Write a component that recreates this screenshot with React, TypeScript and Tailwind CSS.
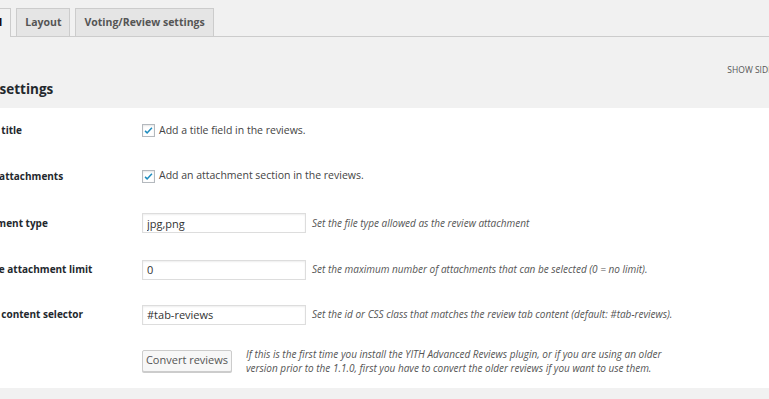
import React from 'react';

const font = { fontFamily: '"Open Sans", "Noto Sans", sans-serif' };

function Label({ children }: { children: React.ReactNode }) {
  return <div className="w-[179px] shrink-0 text-[10px] font-bold text-[#23282d] whitespace-nowrap">{children}</div>;
}

function CheckRow({ label, text, h }: { label: string; text: string; h: string }) {
  return (
    <div className={`flex items-center ${h}`}>
      <Label>{label}</Label>
      <div className="flex items-center gap-[4px]">
        <span className="w-[13px] h-[13px] border border-[#b4b9be] bg-white flex items-center justify-center shadow-[inset_0_1px_2px_rgba(0,0,0,0.1)]">
          <svg width="11" height="11" viewBox="0 0 16 16">
            <path d="M3 8.5l3 3 7-7.5" fill="none" stroke="#1e8cbe" strokeWidth="2.2" />
          </svg>
        </span>
        <span className="text-[10.5px] text-[#444] whitespace-nowrap">{text}</span>
      </div>
    </div>
  );
}

function InputRow({ label, value, desc, h }: { label: string; value: string; desc: string; h: string }) {
  return (
    <div className={`flex items-center ${h}`}>
      <Label>{label}</Label>
      <input
        readOnly
        value={value}
        className="w-[164px] h-[20px] shrink-0 border border-[#ddd] bg-white px-[4px] text-[11px] text-[#333] shadow-[inset_0_1px_2px_rgba(0,0,0,0.07)] outline-none"
        style={font}
      />
      <span className="ml-[6px] text-[10px] italic text-[#555] whitespace-nowrap">{desc}</span>
    </div>
  );
}

export default function App() {
  return (
    <div className="w-[769px] h-[399px] overflow-hidden bg-[#f1f1f1]" style={font}>
      {/* tabs */}
      <div className="flex items-end h-[37px] border-b border-[#ccc]">
        <div className="ml-[-48px] h-[29px] px-[8px] flex items-center border border-b-0 border-[#ccc] bg-[#f1f1f1] mb-[-1px] text-[10.5px] font-bold text-[#000]">
          General
        </div>
        <div className="ml-[5px] h-[28px] px-[8px] flex items-center border border-b-0 border-[#ccc] bg-[#e5e5e5] text-[10.5px] font-bold text-[#555]">
          Layout
        </div>
        <div className="ml-[5px] h-[28px] px-[8px] flex items-center border border-b-0 border-[#ccc] bg-[#e5e5e5] text-[10.5px] font-bold text-[#555]">
          Voting/Review settings
        </div>
      </div>

      <div className="flex justify-end pt-[26px]">
        <span className="mr-[-20px] text-[8.5px] leading-[13px] text-[#555] uppercase whitespace-nowrap">Show sidebar</span>
      </div>

      <h2 className="ml-[-57px] mt-[3px] text-[13.5px] leading-[20px] font-bold text-[#23282d] whitespace-nowrap">General settings</h2>

      <div className="mt-[9px] bg-white h-[280px]">
        <div className="ml-[-37px]">
          <CheckRow h="h-[45px]" label="Review title" text="Add a title field in the reviews." />
          <CheckRow h="h-[46px]" label="Enable attachments" text="Add an attachment section in the reviews." />
          <InputRow h="h-[48px]" label="Attachment type" value="jpg,png" desc="Set the file type allowed as the review attachment" />
          <InputRow h="h-[45px]" label="Multiple attachment limit" value="0" desc="Set the maximum number of attachments that can be selected (0 = no limit)." />
          <InputRow h="h-[45px]" label="Review content selector" value="#tab-reviews" desc="Set the id or CSS class that matches the review tab content (default: #tab-reviews)." />
          <div className="flex items-center h-[47px]">
            <Label>{''}</Label>
            <button className="w-[90px] h-[22px] shrink-0 border border-[#ccc] bg-[#f7f7f7] rounded-[2px] text-[11px] text-[#555] whitespace-nowrap shadow-[0_1px_0_#ccc]">
              Convert reviews
            </button>
            <p className="ml-[14px] text-[10px] italic text-[#555] leading-[14px] whitespace-nowrap">
              If this is the first time you install the YITH Advanced Reviews plugin, or if you are using an older
              <br />
              version prior to the 1.1.0, first you have to convert the older reviews if you want to use them.
            </p>
          </div>
        </div>
      </div>
    </div>
  );
}
